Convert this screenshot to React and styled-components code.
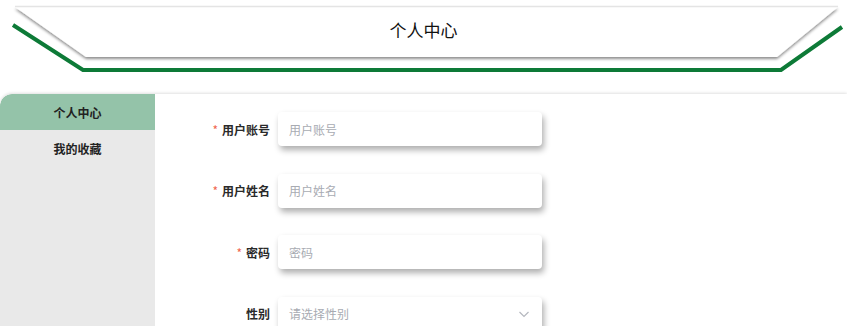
import styled, { createGlobalStyle } from "styled-components";

const Global = createGlobalStyle`
    body {
        margin: 0;
        background: #ffffff;
        font-family: "Noto Sans CJK SC", "Noto Sans", sans-serif;
    }
`

const fields = [
    { label: '用户账号', placeholder: '用户账号', required: true },
    { label: '用户姓名', placeholder: '用户姓名', required: true },
    { label: '密码', placeholder: '密码', required: true, type: 'password' },
    { label: '性别', placeholder: '请选择性别', select: true },
];

function Banner() {
    return (
        <Header>
            <svg width="847" height="88" viewBox="0 0 847 88">
                <defs>
                    <filter id="sh" x="-5%" y="-30%" width="110%" height="170%">
                        <feDropShadow dx="0" dy="2" stdDeviation="1.6" floodColor="#000" floodOpacity="0.45" />
                    </filter>
                </defs>
                <polygon points="15,7 838,7 777,57 86,57" fill="#ffffff" filter="url(#sh)" />
                <line x1="15" y1="6.5" x2="838" y2="6.5" stroke="#e4e4e4" strokeWidth="1.5" />
                <polyline points="13,25 83,70 781,70 842,27" fill="none" stroke="#0d7a37" strokeWidth="4" />
            </svg>
            <Title>个人中心</Title>
        </Header>
    );
}

export default function App() {
    return (
        <>
            <Global />
            <Banner />
            <Body>
                <Sidebar>
                    <NavItem active>个人中心</NavItem>
                    <NavItem>我的收藏</NavItem>
                </Sidebar>
                <Form>
                    {fields.map(f => (
                        <Row key={f.label}>
                            <Label>
                                {f.required && <Star>*</Star>}
                                {f.label}
                            </Label>
                            <Field>
                                {f.select
                                    ? <Placeholder>{f.placeholder}</Placeholder>
                                    : <Input type={f.type || 'text'} placeholder={f.placeholder} />}
                                {f.select && (
                                    <svg width="12" height="12" viewBox="0 0 12 12">
                                        <path d="M1.5 4 L6 8.5 L10.5 4" fill="none" stroke="#b5b8bf" strokeWidth="1.2" />
                                    </svg>
                                )}
                            </Field>
                        </Row>
                    ))}
                </Form>
            </Body>
        </>
    );
}

const Header = styled.header`
    position: relative;
    height: 88px;
    svg {
        position: absolute;
        top: 0;
        left: 0;
    }
`
const Title = styled.h1`
    position: relative;
    margin: 0;
    padding-top: 18px;
    text-align: center;
    font-size: 17px;
    font-weight: 400;
    line-height: 24px;
    color: #111;
`
const Body = styled.main`
    display: flex;
    margin-top: 6px;
    height: 240px;
    box-shadow: 0 -1px 3px rgba(0, 0, 0, 0.12);
    border-top-left-radius: 12px;
    overflow: hidden;
`
const Sidebar = styled.nav`
    width: 155px;
    flex-shrink: 0;
    background: #e9e9e9;
    border-top-left-radius: 12px;
    overflow: hidden;
`
const NavItem = styled.div`
    height: 36px;
    display: flex;
    align-items: center;
    justify-content: center;
    font-size: 12px;
    font-weight: 600;
    color: #222;
    background: ${props => props.active ? '#94c3a9' : 'transparent'};
`
const Form = styled.form`
    display: flex;
    flex-direction: column;
    gap: 27.5px;
    padding-top: 18px;
`
const Row = styled.div`
    display: flex;
    align-items: center;
    gap: 8px;
`
const Label = styled.label`
    width: 115px;
    text-align: right;
    font-size: 12px;
    font-weight: 600;
    color: #2a2a2a;
`
const Star = styled.span`
    color: #f0664f;
    margin-right: 4px;
    font-weight: 400;
`
const Field = styled.div`
    width: 264px;
    height: 34px;
    box-sizing: border-box;
    padding: 0 12px 0 11px;
    display: flex;
    align-items: center;
    justify-content: space-between;
    background: #fff;
    border-radius: 4px;
    box-shadow: 2px 4px 6px rgba(0, 0, 0, 0.32);
`
const Input = styled.input`
    flex: 1;
    border: none;
    outline: none;
    padding: 0;
    font: inherit;
    font-size: 12px;
    color: #333;
    background: transparent;
    &::placeholder {
        color: #a8abb2;
    }
`
const Placeholder = styled.span`
    font-size: 12px;
    color: #a8abb2;
`
